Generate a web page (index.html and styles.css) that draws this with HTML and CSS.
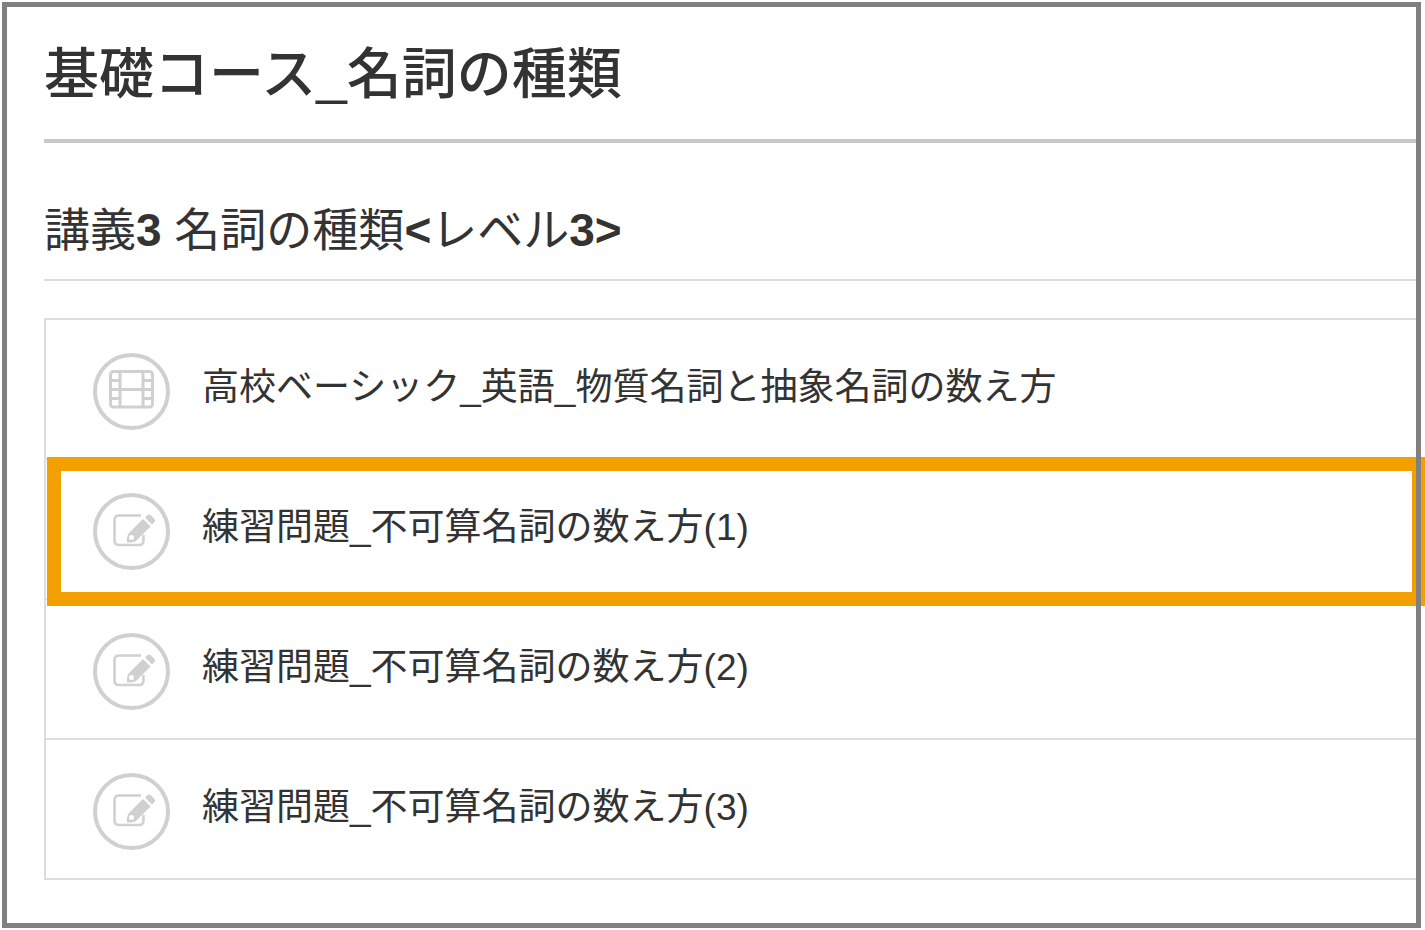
FILE: index.html
```
<!DOCTYPE html>
<html lang="ja">
  <head>
    <meta charset="utf-8">
    <title>基礎コース_名詞の種類</title>
    <link rel="stylesheet" href="styles.css">
  </head>
  <body>
    <!-- icons used by the list -->
    <svg class="symbols" aria-hidden="true">
      <symbol id="film" viewBox="0 0 77 77">
        <circle cx="38.5" cy="38.5" r="36.5" stroke-width="4"/>
        <rect x="17.5" y="18.5" width="42" height="35.5" rx="3" stroke-width="3"/>
        <path d="M27 18.5v35.5M50 18.5v35.5M17.500 36.5h42M17.500 27.500h9.500M17.500 45.500h9.500M50 27.500h9.500M50 45.500h9.500" stroke-width="3"/>
      </symbol>
      <symbol id="edit" viewBox="0 0 77 77">
        <circle cx="38.5" cy="38.5" r="36.5" stroke-width="4"/>
        <path d="M48 22.5H26q-4.500 0-4.500 4.500v20.500q0 4.500 4.500 4.500h20q4.500 0 4.500-4.500v-5.500" stroke-width="2.500"/>
        <path class="solid" d="M50 26l7.500 7.500-14 14q-2 2-9.500 2-.5-7 2-9.500z"/>
        <path class="solid" d="M52 24.500l2.500-2.500q1.500-1 3 0l4 4q1.200 1.500 0 3l-2.500 2.500z"/>
        <circle class="tip" cx="38.5" cy="44.5" r="2.5"/>
      </symbol>
    </svg>

    <div class="page">
      <h1 class="course">基礎コース_名詞の種類</h1>
      <h2 class="lecture">講義<b>3</b> 名詞の種類<b>&lt;</b>レベル<b>3&gt;</b></h2>

      <ul class="list">
        <li class="item">
          <svg class="icon" aria-hidden="true"><use href="#film"/></svg>
          <a class="name" href="#">高校ベーシック_英語_物質名詞と抽象名詞の数え方</a>
        </li>
        <li class="item active">
          <svg class="icon" aria-hidden="true"><use href="#edit"/></svg>
          <a class="name" href="#">練習問題_不可算名詞の数え方(1)</a>
        </li>
        <li class="item">
          <svg class="icon" aria-hidden="true"><use href="#edit"/></svg>
          <a class="name" href="#">練習問題_不可算名詞の数え方(2)</a>
        </li>
        <li class="item">
          <svg class="icon" aria-hidden="true"><use href="#edit"/></svg>
          <a class="name" href="#">練習問題_不可算名詞の数え方(3)</a>
        </li>
      </ul>
    </div>
  </body>
</html>
```
FILE: styles.css
```
* {
  box-sizing: border-box;
}
body {
  margin: 0;
  padding: 2px 4px 2px 2px;
  background-color: #fff;
  color: #333;
  font-family: "Liberation Sans", "Noto Sans CJK JP", sans-serif;
  overflow: hidden;
}
.symbols {
  display: none;
}
.page {
  position: relative;
  min-height: calc(100vh - 4px);
  padding: 37px 5px 40px 42px;
}
/* grey frame, stays above the orange marker */
.page::after {
  content: "";
  position: absolute;
  inset: 0;
  z-index: 2;
  border: 5px solid #808080;
  pointer-events: none;
}
.course {
  margin: 0;
  padding-bottom: 30px;
  border-bottom: 4px solid #c8c8c8;
  font-size: 55px;
  font-weight: 500;
  line-height: 70px;
}
.lecture {
  margin: 0 0 37px;
  padding: 56px 0 18px;
  border-bottom: 2px solid #ddd;
  font-size: 46px;
  font-weight: 400;
  line-height: 62px;
}
.list {
  margin: 0;
  padding: 0;
  list-style: none;
  border: 2px solid #ddd;
  border-right: none;
}
.item {
  position: relative;
  display: flex;
  align-items: flex-start;
  gap: 32px;
  padding: 33px 0 28px 47px;
}
.item + .item {
  border-top: 2px solid #ddd;
}
.icon {
  flex: none;
  width: 77px;
  height: 77px;
  fill: none;
  stroke: #d0d0d0;
}
.solid {
  fill: #d0d0d0;
  stroke: none;
}
.tip {
  fill: #fff;
  stroke: none;
}
.name {
  padding-top: 9px;
  color: #333;
  font-size: 37px;
  line-height: 52px;
  text-decoration: none;
}
.active::after {
  content: "";
  position: absolute;
  top: -3px;
  right: -10px;
  bottom: -8px;
  left: 1px;
  z-index: 1;
  border: 14px solid #f39f00;
  pointer-events: none;
}
```
